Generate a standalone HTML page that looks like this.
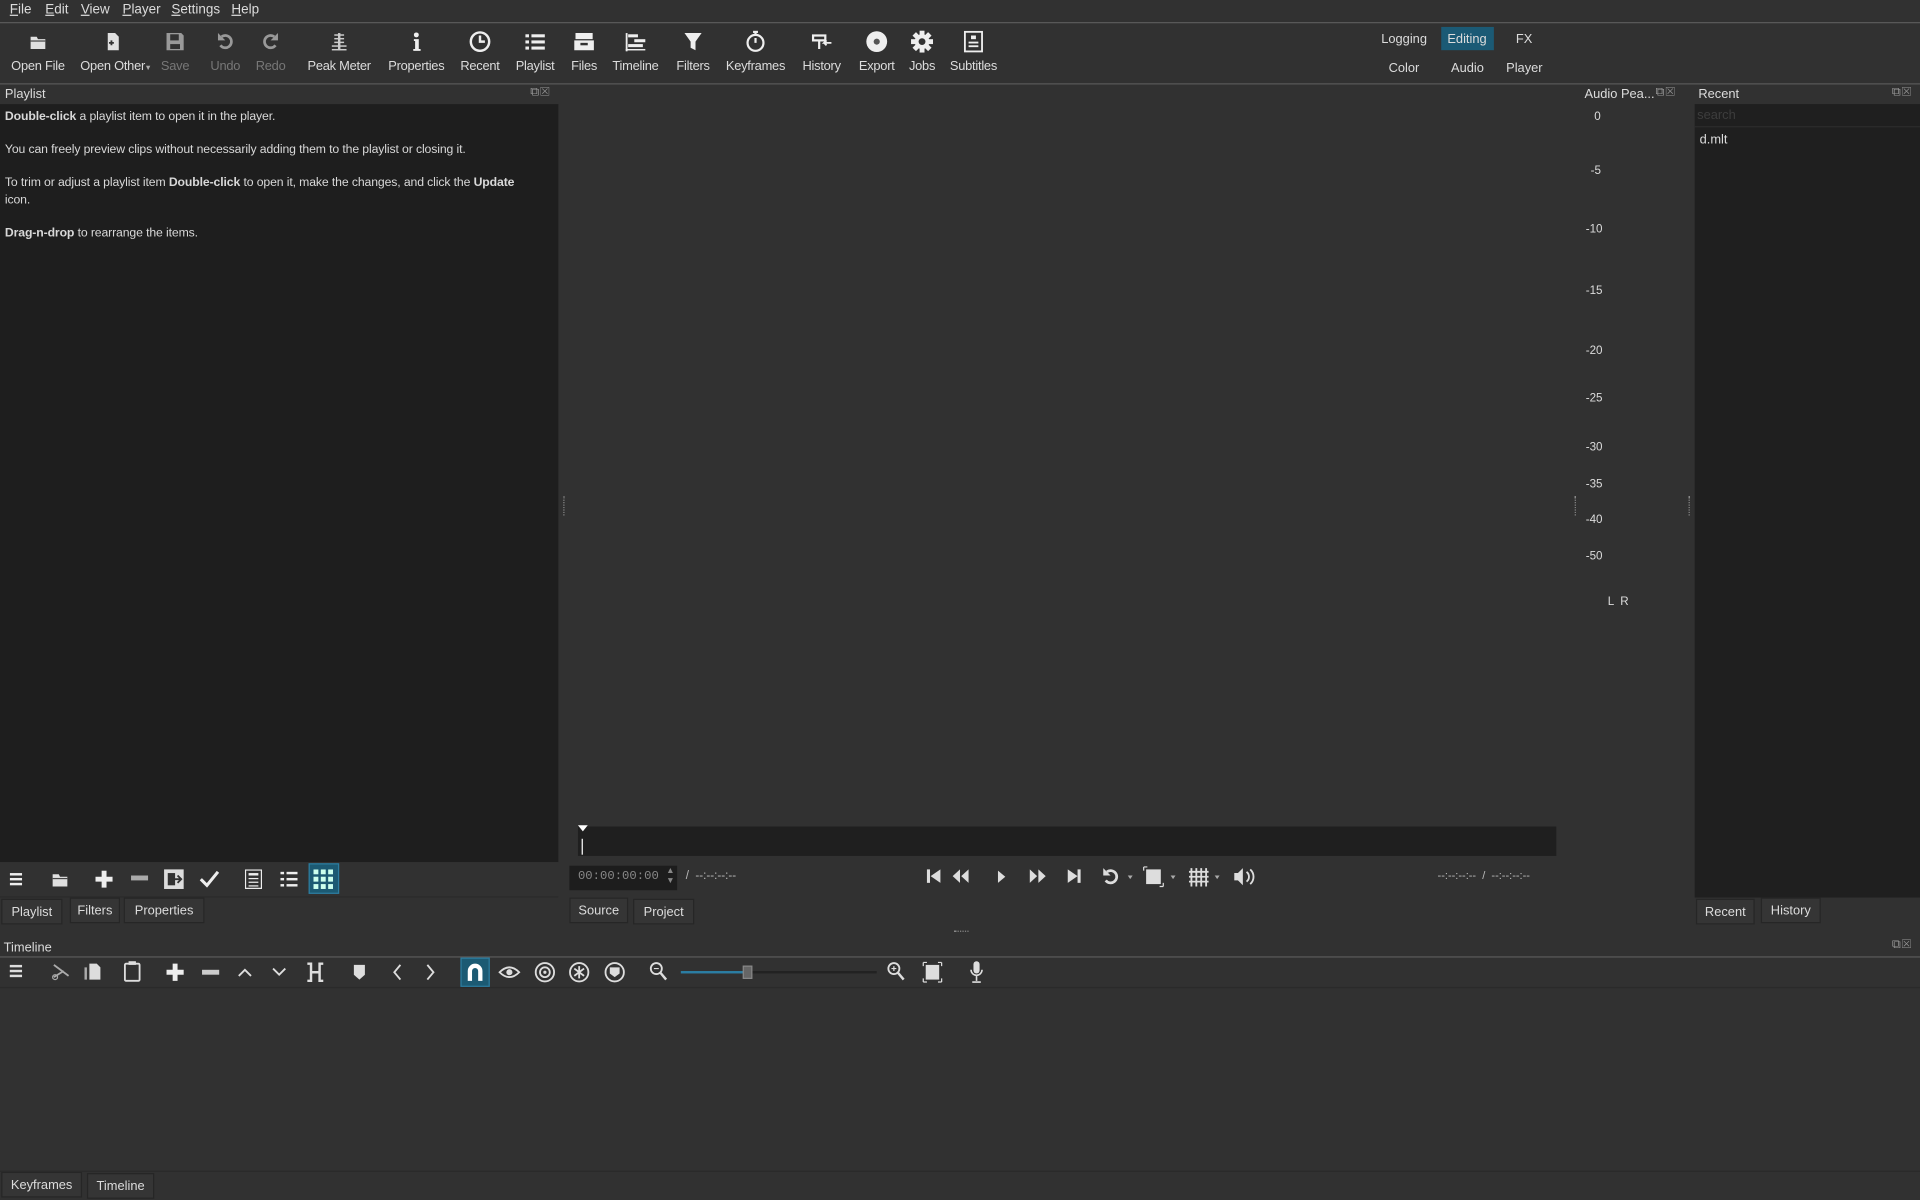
<!DOCTYPE html>
<html><head><meta charset="utf-8">
<style>
html,body{margin:0;padding:0;background:#313131;overflow:hidden;width:1920px;height:1200px}
#s{position:absolute;left:0;top:0;width:1568px;height:980px;transform:scale(1.22449);transform-origin:0 0;background:#313131;font-family:"Liberation Sans",sans-serif;color:#dcdcdc;font-size:10.5px}
.a{position:absolute}
.t{position:absolute;white-space:nowrap}
.hl{position:absolute;left:0;width:1568px;height:1px;background:#555}
.lbl{position:absolute;top:48px;font-size:10.5px;transform:translateX(-50%);white-space:nowrap;letter-spacing:-0.2px}
.ic{position:absolute;transform:translate(-50%,-50%)}
.dis{color:#777}
.tab{position:absolute;height:21px;border:1px solid #262626;background:#353535;font-size:10.5px;line-height:20px;text-align:center;box-sizing:border-box}
.dk{position:absolute;background:#1e1e1e}
.btns{position:absolute;font-size:10px;color:#999;letter-spacing:1px}
svg{display:block}
</style></head><body><div id="s">
<!-- menu -->
<div class="t" style="left:8px;top:2px;font-size:11px"><u>F</u>ile</div>
<div class="t" style="left:37px;top:2px;font-size:11px"><u>E</u>dit</div>
<div class="t" style="left:66px;top:2px;font-size:11px"><u>V</u>iew</div>
<div class="t" style="left:100px;top:2px;font-size:11px"><u>P</u>layer</div>
<div class="t" style="left:140px;top:2px;font-size:11px"><u>S</u>ettings</div>
<div class="t" style="left:189px;top:2px;font-size:11px"><u>H</u>elp</div>
<div class="hl" style="top:18px;background:#5a5a5a"></div>
<!-- toolbar -->
<div class="lbl" style="left:31px">Open File</div>
<div class="lbl" style="left:92px">Open Other</div>
<div class="lbl dis" style="left:143px">Save</div>
<div class="lbl dis" style="left:184px">Undo</div>
<div class="lbl dis" style="left:221px">Redo</div>
<div class="lbl" style="left:277px">Peak Meter</div>
<div class="lbl" style="left:340px">Properties</div>
<div class="lbl" style="left:392px">Recent</div>
<div class="lbl" style="left:437px">Playlist</div>
<div class="lbl" style="left:477px">Files</div>
<div class="lbl" style="left:519px">Timeline</div>
<div class="lbl" style="left:566px">Filters</div>
<div class="lbl" style="left:617px">Keyframes</div>
<div class="lbl" style="left:671px">History</div>
<div class="lbl" style="left:716px">Export</div>
<div class="lbl" style="left:753px">Jobs</div>
<div class="lbl" style="left:795px">Subtitles</div>
<div class="t" style="left:118px;top:53px;font-size:6px;color:#aaa">▼</div>
<div class="ic" style="left:31px;top:34px"><svg width="16" height="14"><path d="M2 3h5l1 2h6v8H2z" fill="#e0e0e0"/><rect x="2" y="6" width="12" height="1" fill="#444"/></svg></div>
<div class="ic" style="left:92px;top:34px"><svg width="14" height="16"><path d="M3 1h6l3 3v11H3z" fill="#e0e0e0"/><path d="M4 9h4M6 7v4" stroke="#333" stroke-width="1.5"/></svg></div>
<div class="ic" style="left:143px;top:34px"><svg width="16" height="16"><path d="M1 1h12l2 2v12H1z" fill="#999"/><rect x="4" y="2" width="7" height="5" fill="#313131"/><rect x="4" y="10" width="8" height="4" fill="#313131"/></svg></div>
<div class="ic" style="left:184px;top:34px"><svg width="14" height="16"><path d="M4 4a5 5 0 1 1 -1 7" stroke="#999" stroke-width="2.2" fill="none"/><path d="M1 1v6h6z" fill="#999"/></svg></div>
<div class="ic" style="left:221px;top:34px"><svg width="14" height="16"><path d="M10 4a5 5 0 1 0 1 7" stroke="#999" stroke-width="2.2" fill="none"/><path d="M13 1v6H7z" fill="#999"/></svg></div>
<div class="ic" style="left:277px;top:34px"><svg width="14" height="16"><g fill="#ccc"><rect x="3" y="2" width="8" height="1.2"/><rect x="3" y="5" width="8" height="1.2"/><rect x="3" y="8" width="8" height="1.2"/><rect x="1" y="11" width="12" height="1.2"/><rect x="1" y="14" width="12" height="1.2"/><rect x="6" y="1" width="2" height="14"/></g></svg></div>
<div class="ic" style="left:340px;top:34px"><svg width="8" height="16"><circle cx="4" cy="2.5" r="2" fill="#eee"/><path d="M2 6h4v8h1.5v1.5h-6V14H3V7.5H2z" fill="#eee"/></svg></div>
<div class="ic" style="left:392px;top:34px"><svg width="18" height="18"><circle cx="9" cy="9" r="7.5" stroke="#eee" stroke-width="2" fill="none"/><path d="M9 4v5h4" stroke="#eee" stroke-width="2" fill="none"/></svg></div>
<div class="ic" style="left:437px;top:34px"><svg width="16" height="14"><g fill="#eee"><rect x="0" y="1" width="3" height="2.5"/><rect x="5" y="1" width="11" height="2.5"/><rect x="0" y="6" width="3" height="2.5"/><rect x="5" y="6" width="11" height="2.5"/><rect x="0" y="11" width="3" height="2.5"/><rect x="5" y="11" width="11" height="2.5"/></g></svg></div>
<div class="ic" style="left:477px;top:34px"><svg width="18" height="16"><path d="M2 1h14v5H2zM1 7h16v8H1z" fill="#eee"/><rect x="6" y="9" width="6" height="2" fill="#313131"/></svg></div>
<div class="ic" style="left:519px;top:34px"><svg width="18" height="16"><g fill="#eee"><rect x="1" y="1" width="1.5" height="15"/><rect x="3" y="2" width="8" height="2.5"/><rect x="8" y="6" width="9" height="2.5"/><rect x="3" y="10" width="12" height="2.5"/><rect x="1" y="14" width="16" height="1.2"/></g></svg></div>
<div class="ic" style="left:566px;top:34px"><svg width="14" height="16"><path d="M0 1h14L9 8v7l-4-2V8z" fill="#eee"/></svg></div>
<div class="ic" style="left:617px;top:34px"><svg width="16" height="18"><circle cx="8" cy="10" r="6.5" stroke="#eee" stroke-width="1.8" fill="none"/><path d="M6 1h4M8 1v3M8 10V6" stroke="#eee" stroke-width="1.8"/></svg></div>
<div class="ic" style="left:671px;top:34px"><svg width="18" height="16"><path d="M2 3h10v4H2zM7 7v7" stroke="#eee" stroke-width="1.8" fill="none"/><path d="M17 9h-6l2-2M11 9l2 2" stroke="#eee" stroke-width="1.5" fill="none"/></svg></div>
<div class="ic" style="left:716px;top:34px"><svg width="18" height="18"><circle cx="9" cy="9" r="8.5" fill="#eee"/><circle cx="9" cy="9" r="2.5" fill="#555"/></svg></div>
<div class="ic" style="left:753px;top:34px"><svg width="18" height="18"><g fill="#eee"><circle cx="9" cy="9" r="6"/><rect x="7" y="0" width="4" height="18"/><rect x="0" y="7" width="18" height="4"/><rect x="7" y="0" width="4" height="18" transform="rotate(45 9 9)"/><rect x="7" y="0" width="4" height="18" transform="rotate(-45 9 9)"/></g><circle cx="9" cy="9" r="2.8" fill="#313131"/></svg></div>
<div class="ic" style="left:795px;top:34px"><svg width="16" height="18"><rect x="1" y="1" width="14" height="16" stroke="#eee" stroke-width="1.5" fill="none"/><rect x="6" y="4" width="4" height="3" fill="#eee"/><rect x="4" y="9" width="8" height="1.5" fill="#eee"/><rect x="4" y="12" width="8" height="1.5" fill="#eee"/></svg></div>
<!-- layouts -->
<div class="a" style="left:1177px;top:22px;width:43px;height:19px;background:#1b5a75"></div>
<div class="t" style="left:1128px;top:26px">Logging</div>
<div class="t" style="left:1182px;top:26px">Editing</div>
<div class="t" style="left:1238px;top:26px">FX</div>
<div class="t" style="left:1134px;top:50px">Color</div>
<div class="t" style="left:1185px;top:50px">Audio</div>
<div class="t" style="left:1230px;top:50px">Player</div>
<div class="hl" style="top:68px;background:#585858"></div>
<!-- playlist panel -->
<div class="t" style="left:4px;top:71px">Playlist</div>
<div class="btns" style="left:433px;top:70px">⧉☒</div>
<div class="dk" style="left:0;top:85px;width:456px;height:619px"></div>
<div class="a" style="left:4px;top:89px;width:450px;line-height:13.5px;font-size:10px;color:#d8d8d8;letter-spacing:-0.1px">
<b>Double-click</b> a playlist item to open it in the player.<br><br>
You can freely preview clips without necessarily adding them to the playlist or closing it.<br><br>
To trim or adjust a playlist item <b>Double-click</b> to open it, make the changes, and click the <b>Update</b><br>icon.<br><br>
<b>Drag-n-drop</b> to rearrange the items.</div>
<!-- playlist toolbar -->
<div class="a" style="left:252px;top:705px;width:25px;height:25px;background:#1c5a73;border:1px solid #2d7da0;box-sizing:border-box"></div>
<div class="ic" style="left:14px;top:718px"><svg width="12" height="12"><g fill="#eee"><rect y="1" width="10" height="2"/><rect y="5" width="10" height="2"/><rect y="9" width="10" height="2"/></g></svg></div>
<div class="ic" style="left:49px;top:718px"><svg width="16" height="14"><path d="M2 3h5l1 2h6v8H2z" fill="#e0e0e0"/><rect x="2" y="6" width="12" height="1" fill="#444"/></svg></div>
<div class="ic" style="left:85px;top:718px"><svg width="14" height="14"><path d="M5 0h4v5h5v4H9v5H5V9H0V5h5z" fill="#eee"/></svg></div>
<div class="ic" style="left:114px;top:718px"><svg width="14" height="6"><rect width="14" height="4" fill="#aaa"/></svg></div>
<div class="ic" style="left:142px;top:718px"><svg width="18" height="18"><rect x="1" y="1" width="16" height="16" fill="#ddd"/><rect x="4" y="4" width="6" height="10" fill="#333"/><path d="M9 9h6M12 6l3 3-3 3" stroke="#333" stroke-width="1.5" fill="none"/></svg></div>
<div class="ic" style="left:171px;top:718px"><svg width="16" height="14"><path d="M1 7l5 5L15 1" stroke="#eee" stroke-width="2.5" fill="none"/></svg></div>
<div class="ic" style="left:207px;top:718px"><svg width="14" height="16"><rect x="0.5" y="0.5" width="13" height="15" stroke="#eee" fill="none"/><g fill="#eee"><rect x="3" y="3" width="8" height="2"/><rect x="3" y="7" width="8" height="1"/><rect x="3" y="10" width="8" height="1"/><rect x="3" y="13" width="8" height="1"/></g></svg></div>
<div class="ic" style="left:236px;top:718px"><svg width="14" height="14"><g fill="#eee"><rect y="1" width="3" height="2"/><rect x="5" y="1" width="9" height="2"/><rect y="6" width="3" height="2"/><rect x="5" y="6" width="9" height="2"/><rect y="11" width="3" height="2"/><rect x="5" y="11" width="9" height="2"/></g></svg></div>
<div class="ic" style="left:264px;top:718px"><svg width="16" height="16"><g fill="#cfe"><rect width="4" height="4"/><rect x="6" width="4" height="4"/><rect x="12" width="4" height="4"/><rect y="6" width="4" height="4"/><rect x="6" y="6" width="4" height="4"/><rect x="12" y="6" width="4" height="4"/><rect y="12" width="4" height="4"/><rect x="6" y="12" width="4" height="4"/><rect x="12" y="12" width="4" height="4"/></g></svg></div>
<div class="a" style="left:0;top:732px;width:456px;height:1px;background:#2a2a2a"></div>
<div class="tab" style="left:1px;top:734px;width:50px">Playlist</div>
<div class="tab" style="left:57px;top:733px;width:41px">Filters</div>
<div class="tab" style="left:101px;top:733px;width:66px">Properties</div>
<!-- player -->
<div class="a" style="left:460px;top:405px;width:2px;height:16px;border-left:1px dotted #888"></div>
<div class="a" style="left:1286px;top:405px;width:2px;height:16px;border-left:1px dotted #888"></div>
<div class="a" style="left:1379px;top:405px;width:2px;height:16px;border-left:1px dotted #888"></div>
<div class="dk" style="left:472px;top:675px;width:799px;height:24px;background:#1f1f1f"></div>
<div class="a" style="left:472px;top:674px;width:0;height:0;border-left:4px solid transparent;border-right:4px solid transparent;border-top:5px solid #fff"></div>
<div class="a" style="left:475px;top:685px;width:1px;height:13px;background:#fff"></div>
<div class="dk" style="left:465px;top:707px;width:88px;height:20px;background:#1d1d1d"></div>
<div class="t" style="left:472px;top:711px;font-family:'Liberation Mono',monospace;font-size:10px;color:#888">00:00:00:00</div>
<div class="t" style="left:544px;top:708px;font-size:7px;color:#888;line-height:8px">▲<br>▼</div>
<div class="t" style="left:560px;top:710px;color:#bbb;font-size:9.5px">/ &nbsp;--:--:--:--</div>
<div class="t" style="left:1174px;top:710px;color:#bbb;font-size:9px">--:--:--:-- &nbsp;/ &nbsp;--:--:--:--</div>
<svg class="a" style="left:752px;top:706px" width="280" height="20">
<g fill="#ddd">
<rect x="5" y="4" width="2.5" height="11"/><path d="M16 4v11l-8-5.5z"/>
<path d="M32 4v11l-6-5.5zM39 4v11l-6-5.5z"/>
<path d="M63 5v10l6-5z"/>
<path d="M89 4v11l6-5.5zM96 4v11l6-5.5z"/>
<path d="M120 4v11l8-5.5z"/><rect x="128" y="4" width="2.5" height="11"/>
</g>
<path d="M152 6a5 5 0 1 1 -1 7" stroke="#ddd" stroke-width="2.2" fill="none"/><path d="M149 3v6h6z" fill="#ddd"/>
<path d="M169 9l2 3 2-3z" fill="#aaa"/>
<rect x="184" y="4" width="12" height="12" fill="#ddd"/><path d="M182 2h3M182 2v3M198 18h-3M198 18v-3" stroke="#ddd"/>
<path d="M204 9l2 3 2-3z" fill="#aaa"/>
<g stroke="#ddd" stroke-width="1.5"><path d="M221 3v15M225 3v15M229 3v15M233 3v15M219 6h16M219 10h16M219 14h16"/></g>
<path d="M240 9l2 3 2-3z" fill="#aaa"/>
<path d="M256 7h3l4-4v14l-4-4h-3z" fill="#ddd"/><path d="M266 6a5 5 0 0 1 0 8M269 4a8 8 0 0 1 0 12" stroke="#ddd" stroke-width="1.5" fill="none"/>
</svg>
<div class="tab" style="left:465px;top:733px;width:48px">Source</div>
<div class="tab" style="left:517px;top:734px;width:50px">Project</div>
<div class="a" style="left:779px;top:760px;width:12px;height:1px;border-top:1px dotted #888"></div>
<!-- audio peak -->
<div class="t" style="left:1294px;top:71px">Audio Pea...</div>
<div class="btns" style="left:1352px;top:70px">⧉☒</div>
<div class="t" style="left:1302px;top:90px;font-size:9.5px">0</div>
<div class="t" style="left:1299px;top:134px;font-size:9.5px">-5</div>
<div class="t" style="left:1295px;top:182px;font-size:9.5px">-10</div>
<div class="t" style="left:1295px;top:232px;font-size:9.5px">-15</div>
<div class="t" style="left:1295px;top:281px;font-size:9.5px">-20</div>
<div class="t" style="left:1295px;top:320px;font-size:9.5px">-25</div>
<div class="t" style="left:1295px;top:360px;font-size:9.5px">-30</div>
<div class="t" style="left:1295px;top:390px;font-size:9.5px">-35</div>
<div class="t" style="left:1295px;top:419px;font-size:9.5px">-40</div>
<div class="t" style="left:1295px;top:449px;font-size:9.5px">-50</div>
<div class="t" style="left:1313px;top:486px;font-size:9.5px">L &nbsp;R</div>
<!-- recent -->
<div class="t" style="left:1387px;top:71px">Recent</div>
<div class="btns" style="left:1545px;top:70px">⧉☒</div>
<div class="dk" style="left:1384px;top:85px;width:184px;height:648px;background:#1f1f1f"></div>
<div class="a" style="left:1384px;top:103px;width:184px;height:1px;background:#2c2c2c"></div>
<div class="t" style="left:1386px;top:88px;color:#3d3d3d">search</div>
<div class="t" style="left:1388px;top:108px">d.mlt</div>
<div class="tab" style="left:1385px;top:734px;width:48px">Recent</div>
<div class="tab" style="left:1438px;top:733px;width:49px">History</div>
<!-- timeline -->
<div class="t" style="left:3px;top:768px">Timeline</div>
<div class="btns" style="left:1545px;top:766px">⧉☒</div>
<div class="hl" style="top:781px;background:#5a5a5a"></div>
<div class="a" style="left:376px;top:782px;width:24px;height:24px;background:#1c5a73;border:1px solid #2d7da0;box-sizing:border-box"></div>
<svg class="a" style="left:0;top:783px" width="820" height="22">
<g fill="#ddd">
<rect x="8" y="5" width="10" height="2"/><rect x="8" y="9" width="10" height="2"/><rect x="8" y="13" width="10" height="2"/>
</g>
<path d="M44 5l12 9M44 15l8-5" stroke="#aaa" stroke-width="1.5"/><circle cx="45" cy="15" r="2" stroke="#aaa" fill="none"/>
<path d="M73 4h6l3 3v10h-9z" fill="#ddd"/><path d="M70 7v10" stroke="#aaa" stroke-width="2"/>
<rect x="102" y="4" width="12" height="14" rx="1" stroke="#ddd" stroke-width="1.5" fill="none"/><rect x="105" y="2" width="6" height="3" fill="#ddd"/>
<path d="M141 4h4v5h5v4h-5v5h-4v-5h-5V9h5z" fill="#eee"/>
<rect x="165" y="9" width="14" height="4" fill="#ccc"/>
<path d="M195 14l5-5 5 5M223 8l5 5 5-5" stroke="#ddd" stroke-width="1.5" fill="none"/>
<path d="M251 4h3v14h-3M264 4h-3v14h3M254 11h7" stroke="#ddd" stroke-width="2" fill="none"/>
<path d="M289 5h9v8l-4.5 4-4.5-4z" fill="#ddd"/>
<path d="M327 5l-5 6 5 6M349 5l5 6-5 6" stroke="#ddd" stroke-width="1.5" fill="none"/>
<path d="M382 18V10a6 6 0 0 1 12 0v8h-3.5v-8a2.5 2.5 0 0 0-5 0v8z" fill="#fff"/>
<path d="M408 11q8-8 16 0q-8 8-16 0z" stroke="#ddd" stroke-width="1.5" fill="none"/><circle cx="416" cy="11" r="2.5" fill="#ddd"/>
<circle cx="445" cy="11" r="7.5" stroke="#ddd" stroke-width="1.5" fill="none"/><circle cx="445" cy="11" r="4" stroke="#ddd" stroke-width="1.5" fill="none"/><circle cx="445" cy="11" r="1.3" fill="#ddd"/>
<circle cx="473" cy="11" r="7.5" stroke="#ddd" stroke-width="1.5" fill="none"/><path d="M473 6v10M469 8l8 6M477 8l-8 6" stroke="#ddd" stroke-width="1.5"/>
<circle cx="502" cy="11" r="7.5" stroke="#ddd" stroke-width="1.5" fill="none"/><path d="M498 7h8v5l-4 3-4-3z" fill="#ddd"/>
<circle cx="536" cy="8" r="4.5" stroke="#ddd" stroke-width="1.5" fill="none"/><path d="M539 11l5 6" stroke="#ddd" stroke-width="2"/><path d="M534 8h4" stroke="#ddd"/>
<rect x="556" y="10" width="56" height="2" fill="#2b7da3"/><rect x="612" y="10" width="104" height="2" fill="#222"/><rect x="607" y="6" width="7" height="10" fill="#666" stroke="#888"/>
<circle cx="730" cy="8" r="4.5" stroke="#ddd" stroke-width="1.5" fill="none"/><path d="M733 11l5 6" stroke="#ddd" stroke-width="2"/><path d="M728 8h4M730 6v4" stroke="#ddd"/>
<rect x="756" y="5" width="11" height="12" fill="#ddd"/><path d="M754 3h3M754 3v3M769 19h-3M769 19v-3M769 3h-3M769 3v3M754 19h3M754 19v-3" stroke="#ddd"/>
<rect x="795" y="2" width="5" height="10" rx="2.5" fill="#ddd"/><path d="M793 9a4.5 4.5 0 0 0 9 0M797.5 14v4M794 19h7" stroke="#ddd" stroke-width="1.3" fill="none"/>
</svg>
<div class="a" style="left:0;top:806px;width:1568px;height:1px;background:#2a2a2a"></div>
<div class="a" style="left:0;top:956px;width:1568px;height:1px;background:#2a2a2a"></div>
<div class="tab" style="left:1px;top:957px;width:66px">Keyframes</div>
<div class="tab" style="left:71px;top:958px;width:55px">Timeline</div>
</div></body></html>
